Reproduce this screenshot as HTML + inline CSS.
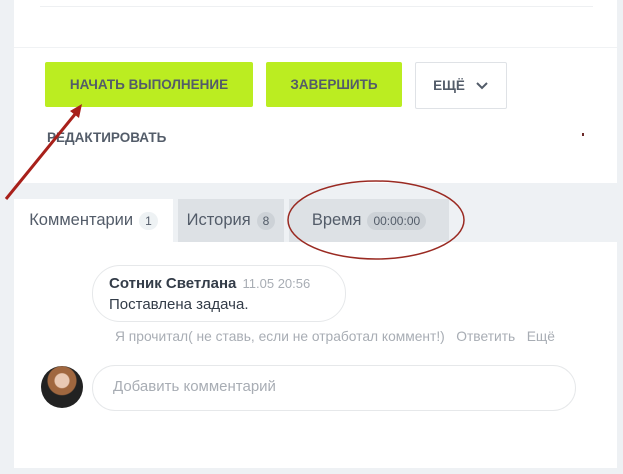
<!DOCTYPE html>
<html><head><meta charset="utf-8"><style>
body{margin:0;width:623px;height:474px;background:#eef1f4;position:relative;overflow:hidden;font-family:"Liberation Sans",sans-serif}
.a{position:absolute}
.btn{position:absolute;top:62px;height:45px;background:#bbed21;border-radius:2px;font-weight:bold;font-size:13.5px;color:#535c69;display:flex;align-items:center;justify-content:center}
.tab{position:absolute;top:199px;height:43px;display:flex;align-items:center;font-size:16.5px;color:#535c69}
.badge{background:#e0e4e8;border-radius:9px;font-size:12px;padding:2px 6px;margin-left:6px;color:#535c69}
</style></head><body>
<div class="a" style="left:14px;top:0;width:603px;height:183px;background:#fff"></div>
<div class="a" style="left:40px;top:6px;width:553px;height:1px;background:#eef0f2"></div>
<div class="a" style="left:14px;top:47px;width:603px;height:1px;background:#f0f2f4"></div>
<div class="btn" style="left:45px;width:208px">НАЧАТЬ ВЫПОЛНЕНИЕ</div>
<div class="btn" style="left:266px;width:136px">ЗАВЕРШИТЬ</div>
<div class="btn" style="left:415px;width:90px;background:#fff;border:1px solid #dfe2e6">ЕЩЁ <svg width="14" height="10" style="margin-left:10px"><path d="M2 2l5 5 5-5" stroke="#535c69" stroke-width="2" fill="none"/></svg></div>
<div class="a" style="left:47px;top:130px;font-size:13.5px;font-weight:bold;color:#535c69">РЕДАКТИРОВАТЬ</div>
<div class="tab" style="left:14px;width:159px;background:#fff;justify-content:center">Комментарии<span class="badge" style="background:#eef2f4">1</span></div>
<div class="tab" style="left:178px;width:106px;background:#dde1e5;justify-content:center">История<span class="badge" style="background:#cdd2d7">8</span></div>
<div class="tab" style="left:289px;width:160px;background:#dde1e5;justify-content:center">Время<span class="badge" style="background:#cdd2d7">00:00:00</span></div>
<div class="a" style="left:14px;top:242px;width:603px;height:226px;background:#fff"></div>
<div class="a" style="left:92px;top:265px;width:252px;height:55px;border:1px solid #e6e8ea;border-radius:28px"></div>
<div class="a" style="left:109px;top:275px;font-size:15px;font-weight:bold;color:#333c48">Сотник Светлана <span style="font-weight:normal;font-size:13px;color:#a8adb4;margin-left:2px">11.05 20:56</span></div>
<div class="a" style="left:109px;top:296px;font-size:15px;color:#333c48">Поставлена задача.</div>
<div class="a" style="left:115px;top:329px;font-size:13.8px;color:#a8adb4;white-space:pre">Я прочитал( не ставь, если не отработал коммент!)   Ответить   Ещё</div>
<div class="a" style="left:41px;top:366px;width:42px;height:42px;border-radius:50%;background:radial-gradient(circle at 50% 35%,#e9c9b4 0 7px,#a0673f 8px 14px,#222 15px)"></div>
<div class="a" style="left:92px;top:365px;width:482px;height:44px;border:1px solid #e6e8ea;border-radius:23px"></div>
<div class="a" style="left:113px;top:378px;font-size:15px;color:#a8adb4">Добавить комментарий</div>
<div class="a" style="left:582px;top:133px;width:2px;height:3px;background:#6b2a2a"></div>
<svg class="a" style="left:0;top:0" width="623" height="474">
<line x1="6" y1="199" x2="76" y2="113" stroke="#a8201a" stroke-width="3"/>
<path d="M82 104 L70 111 L79 118 Z" fill="#a8201a"/>
<ellipse cx="376" cy="220" rx="88" ry="39" fill="none" stroke="#9a2a22" stroke-width="1.5"/>
</svg>
</body></html>
